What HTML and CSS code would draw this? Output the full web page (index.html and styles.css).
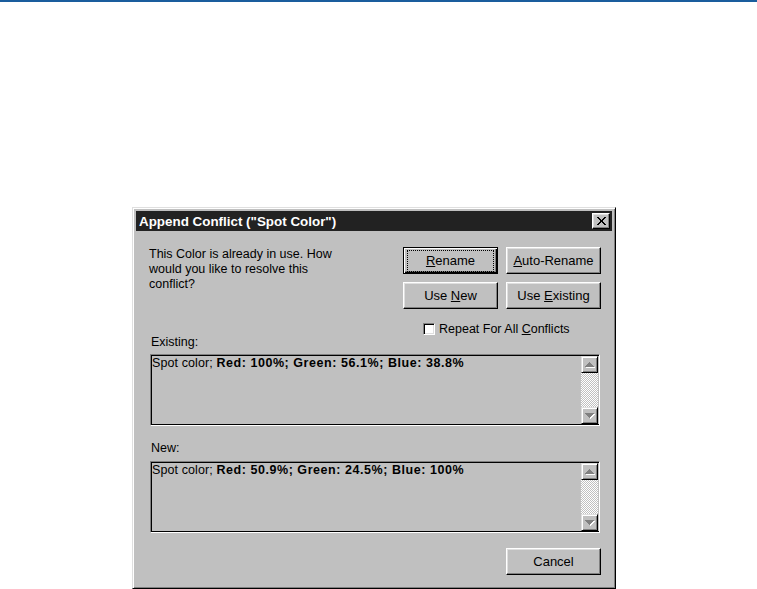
FILE: index.html
```html
<!DOCTYPE html>
<html>
<head>
<meta charset="utf-8">
<link rel="stylesheet" href="styles.css">
</head>
<body>
<div class="topbar"></div>
<div class="dialog">
  <div class="titlebar">
    <span class="title">Append Conflict ("Spot Color")</span>
    <span class="close">
      <svg width="9" height="8" viewBox="0 0 9 8" shape-rendering="crispEdges"><path d="M0 0h2v1h-2zM7 0h2v1h-2zM1 1h2v1h-2zM6 1h2v1h-2zM2 2h2v1h-2zM5 2h2v1h-2zM3 3h3v2h-3zM2 5h2v1h-2zM5 5h2v1h-2zM1 6h2v1h-2zM6 6h2v1h-2zM0 7h2v1h-2zM7 7h2v1h-2z" fill="#000"/></svg>
    </span>
  </div>
  <div class="content">
    <div class="top">
      <p class="msg">This Color is already in use. How<br>would you like to resolve this<br>conflict?</p>
      <div class="actions">
        <div class="btngrid">
          <button class="btn default"><u>R</u>ename</button>
          <button class="btn"><u>A</u>uto-Rename</button>
          <button class="btn">Use <u>N</u>ew</button>
          <button class="btn">Use <u>E</u>xisting</button>
        </div>
        <div class="check"><span class="box"></span><span>Repeat For All <u>C</u>onflicts</span></div>
      </div>
    </div>

    <div class="label label-first">Existing:</div>
    <div class="field">
      <div class="fieldtext">Spot color; <b>Red: 100%; Green: 56.1%; Blue: 38.8%</b></div>
      <div class="scroll">
        <div class="sbtn"><svg width="10" height="6" viewBox="0 0 10 6" shape-rendering="crispEdges"><path d="M5 1h1v1h-1zM4 2h3v1h-3zM3 3h5v1h-5zM2 4h7v1h-7zM1 5h9v1h-9z" fill="#fff"/><path d="M4 0h1v1h-1zM3 1h3v1h-3zM2 2h5v1h-5zM1 3h7v1h-7zM0 4h9v1h-9z" fill="#808080"/></svg></div>
        <div class="track"></div>
        <div class="sbtn"><svg width="10" height="6" viewBox="0 0 10 6" shape-rendering="crispEdges"><path d="M1 1h9v1h-9zM2 2h7v1h-7zM3 3h5v1h-5zM4 4h3v1h-3zM5 5h1v1h-1z" fill="#fff"/><path d="M0 0h9v1h-9zM1 1h7v1h-7zM2 2h5v1h-5zM3 3h3v1h-3zM4 4h1v1h-1z" fill="#808080"/></svg></div>
      </div>
    </div>

    <div class="label label-second">New:</div>
    <div class="field">
      <div class="fieldtext">Spot color; <b>Red: 50.9%; Green: 24.5%; Blue: 100%</b></div>
      <div class="scroll">
        <div class="sbtn"><svg width="10" height="6" viewBox="0 0 10 6" shape-rendering="crispEdges"><path d="M5 1h1v1h-1zM4 2h3v1h-3zM3 3h5v1h-5zM2 4h7v1h-7zM1 5h9v1h-9z" fill="#fff"/><path d="M4 0h1v1h-1zM3 1h3v1h-3zM2 2h5v1h-5zM1 3h7v1h-7zM0 4h9v1h-9z" fill="#808080"/></svg></div>
        <div class="track"></div>
        <div class="sbtn"><svg width="10" height="6" viewBox="0 0 10 6" shape-rendering="crispEdges"><path d="M1 1h9v1h-9zM2 2h7v1h-7zM3 3h5v1h-5zM4 4h3v1h-3zM5 5h1v1h-1z" fill="#fff"/><path d="M0 0h9v1h-9zM1 1h7v1h-7zM2 2h5v1h-5zM3 3h3v1h-3zM4 4h1v1h-1z" fill="#808080"/></svg></div>
      </div>
    </div>

    <div class="footer"><button class="btn">Cancel</button></div>
  </div>
</div>
</body>
</html>
```

FILE: styles.css
```css
body {
  margin: 0;
  background: #fff;
  font-family: "Liberation Sans", Arial, sans-serif;
  font-size: 12.5px;
  color: #000;
}

.topbar {
  height: 2px;
  background: #1a5d9d;
}

.dialog {
  margin: 205px 0 0 132px;
  width: 484px;
  height: 382px;
  box-sizing: border-box;
  background: #c0c0c0;
  border: 1px solid;
  border-color: #dfdfdf #000 #000 #dfdfdf;
  box-shadow: inset 1px 1px #fff, inset -1px -1px #808080;
  padding: 3px;
  display: flex;
  flex-direction: column;
}

.titlebar {
  height: 20px;
  background: #222;
  display: flex;
  align-items: center;
  justify-content: space-between;
  padding: 0 2px 0 3px;
}

.title {
  color: #fff;
  font-weight: bold;
  font-size: 13.4px;
}

.close {
  width: 18px;
  height: 16px;
  box-sizing: border-box;
  background: #c0c0c0;
  border: 1px solid;
  border-color: #fff #000 #000 #fff;
  box-shadow: inset -1px -1px #808080, inset 1px 1px #dfdfdf;
  display: flex;
  align-items: center;
  justify-content: center;
}

.close svg {
  display: block;
}

.content {
  flex: 1;
  padding: 16px 11px 0 14px;
  display: flex;
  flex-direction: column;
}

.top {
  display: flex;
  justify-content: space-between;
}

.msg {
  margin: 0 0 0 -1px;
  line-height: 15px;
}

.btngrid {
  display: grid;
  grid-template-columns: 95px 95px;
  column-gap: 8px;
  row-gap: 8px;
}

.btn {
  height: 27px;
  font: inherit;
  font-size: 13px;
  color: #000;
  background: #c0c0c0;
  border: 1px solid;
  border-color: #fff #000 #000 #fff;
  box-shadow: inset -1px -1px #808080, inset 1px 1px #dfdfdf;
  padding: 0;
  position: relative;
}

.btn.default {
  border-color: #000;
  box-shadow: inset 1px 1px #fff, inset -1px -1px #000, inset -2px -2px #808080;
}

.btn.default::after {
  content: "";
  position: absolute;
  inset: 2px 3px 1px 3px;
  border: 1px dotted #000;
}

.check {
  display: flex;
  align-items: center;
  gap: 4px;
  height: 13px;
  margin: 13px 0 0 20px;
}

.box {
  width: 12px;
  height: 12px;
  box-sizing: border-box;
  background: #fff;
  border: 1px solid;
  border-color: #808080 #fff #fff #808080;
  box-shadow: inset 1px 1px #000, inset -1px -1px #dfdfdf;
}

.label {
  line-height: 15px;
  padding-left: 1px;
}

.label-first {
  margin-bottom: 4px;
}

.label-second {
  margin-top: 15px;
  margin-bottom: 5px;
}

.field {
  width: 450px;
  height: 72px;
  box-sizing: border-box;
  display: flex;
  border: 1px solid;
  border-color: #808080 #fff #fff #808080;
  box-shadow: inset 1px 1px #000, inset 0 -1px #000;
}

.fieldtext {
  flex: 1;
  padding: 1px 0 0 1px;
  line-height: 15px;
  letter-spacing: 0.1px;
}

.fieldtext b {
  letter-spacing: 0.55px;
}

.scroll {
  width: 17px;
  margin: 1px 1px 1px 0;
  display: flex;
  flex-direction: column;
}

.sbtn {
  height: 17px;
  box-sizing: border-box;
  background: #c0c0c0;
  border: 1px solid;
  border-color: #dfdfdf #000 #000 #dfdfdf;
  box-shadow: inset 1px 1px #fff, inset -1px -1px #808080;
  display: flex;
  align-items: center;
  justify-content: center;
}

.sbtn svg {
  display: block;
}

.track {
  flex: 1;
  background-color: #fff;
  background-image: repeating-conic-gradient(#c0c0c0 0 25%, #fff 0 50%);
  background-size: 2px 2px;
}

.footer {
  margin-top: 15px;
  display: flex;
  justify-content: flex-end;
}

.footer .btn {
  width: 95px;
}
```
